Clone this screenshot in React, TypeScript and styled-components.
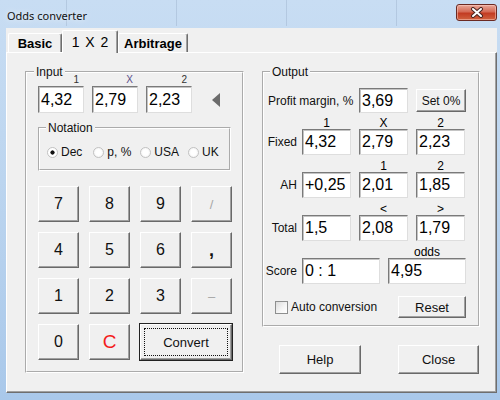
import React from "react";
import styled, { createGlobalStyle } from "styled-components";

const GlobalStyle = createGlobalStyle`
  html, body {
    margin: 0;
    padding: 0;
  }
  body {
    width: 500px;
    height: 400px;
    overflow: hidden;
    font-family: "Liberation Sans", Arial, sans-serif;
  }
`;

const Frame = styled.div`
  width: 500px;
  height: 400px;
  box-sizing: border-box;
  padding: 0 3px 7px 6px;
  display: flex;
  flex-direction: column;
  background:
    repeating-linear-gradient(
        90deg,
        transparent 0 66px,
        rgba(110, 130, 160, 0.22) 66px 67px,
        transparent 67px 110px
      )
      top / 100% 26px no-repeat,
    linear-gradient(180deg, #c8ddf3 0%, #bcd5ef 45%, #a9c8ea 100%);
`;

const TitleBar = styled.div`
  flex: none;
  height: 28px;
  display: flex;
  align-items: flex-start;
`;

const Title = styled.span`
  margin: 9px 0 0 1px;
  font: 11px/14px "Noto Sans", "Open Sans", sans-serif;
  color: #111;
  text-shadow: 0 0 6px rgba(255, 255, 255, 0.9);
`;

const CloseBox = styled.div`
  margin: 4px 0 0 auto;
  width: 41px;
  height: 17px;
  box-sizing: border-box;
  border: 1px solid #6b2a22;
  border-radius: 3px;
  background: linear-gradient(180deg, #e9a899 0%, #d46a55 45%, #c23b22 55%, #d0623f 100%);
  display: flex;
  align-items: center;
  justify-content: center;
  box-shadow: inset 0 0 0 1px rgba(255, 210, 200, 0.5);
`;

const Client = styled.div`
  flex: 1;
  display: flex;
  flex-direction: column;
  background: #f0f0f0;
`;

const TabStrip = styled.div`
  flex: none;
  height: 24px;
  display: flex;
  align-items: flex-end;
  padding-left: 2px;
  position: relative;
  z-index: 1;
`;

const Tab = styled.div<{ $active?: boolean; $w: number }>`
  width: ${(p) => p.$w}px;
  height: ${(p) => (p.$active ? 23 : 19)}px;
  margin-bottom: ${(p) => (p.$active ? -1 : 0)}px;
  box-sizing: border-box;
  display: flex;
  align-items: center;
  justify-content: center;
  background: #f0f0f0;
  border-top: 1px solid #fff;
  border-left: 1px solid #fff;
  border-right: 1px solid #6e6e6e;
  box-shadow: inset -1px 0 0 #a0a0a0;
  border-radius: 2px 2px 0 0;
  font-size: ${(p) => (p.$active ? 14 : 13)}px;
  font-weight: ${(p) => (p.$active ? 400 : 700)};
  word-spacing: ${(p) => (p.$active ? 2 : 0)}px;
  color: #000;
  white-space: pre;
`;

const TabPage = styled.div`
  flex: 1;
  box-sizing: border-box;
  border-style: solid;
  border-width: 1px;
  border-color: #fff #6e6e6e #6e6e6e #fff;
  box-shadow: inset -1px -1px 0 #a0a0a0;
  padding: 12px 0 0 18px;
  display: flex;
  align-items: flex-start;
  gap: 18px;
`;

/* etched group box: grey line with a white line beside it */
const Group = styled.fieldset<{ $w?: number; $pad: string }>`
  margin: 0;
  min-width: 0;
  ${(p) => (p.$w ? `width: ${p.$w}px;` : "")}
  box-sizing: border-box;
  padding: ${(p) => p.$pad};
  border: 2px groove #ffffff;
`;

const Legend = styled.legend<{ $offset: number }>`
  padding: 0 2px;
  margin-left: ${(p) => p.$offset}px;
  font-size: 12px;
  line-height: 14px;
  color: #111;
`;

const HeadRow = styled.div`
  display: flex;
  gap: 8px;
  height: 9px;
  margin-top: -4px;
`;

const SmallHead = styled.span<{ $tint?: string }>`
  width: 46px;
  box-sizing: border-box;
  padding-right: 5px;
  text-align: right;
  font-size: 10px;
  line-height: 9px;
  color: ${(p) => p.$tint ?? "#333"};
`;

const InputsRow = styled.div`
  display: flex;
  align-items: center;
  gap: 8px;
  margin-top: 2px;
`;

const OddsBox = styled.div<{ $w: number; $h: number }>`
  width: ${(p) => p.$w}px;
  height: ${(p) => p.$h}px;
  box-sizing: border-box;
  background: #fff;
  border-style: solid;
  border-width: 1px;
  border-color: #7a7a7a #dedede #dedede #7a7a7a;
  box-shadow: inset 1px 1px 0 #c4c4c4;
  padding-left: 2px;
  font-size: 16px;
  line-height: ${(p) => p.$h - 2}px;
  color: #000;
  white-space: pre;
`;

const Arrow = styled.svg`
  margin-left: 12px;
`;

const RadioRow = styled.div`
  display: flex;
  align-items: center;
  gap: 9px;
  height: 14px;
`;

const RadioItem = styled.label<{ $extra?: number }>`
  display: flex;
  align-items: center;
  gap: 3px;
  margin-right: ${(p) => p.$extra ?? 0}px;
  font-size: 12px;
  color: #111;
`;

const RadioDot = styled.span<{ $on?: boolean }>`
  width: 11px;
  height: 11px;
  box-sizing: border-box;
  border-radius: 50%;
  border: 1px solid #c2c2c2;
  background: ${(p) =>
    p.$on
      ? "radial-gradient(circle, #111 0 1.8px, #fff 2.4px)"
      : "radial-gradient(circle, #fff 0 40%, #ececec 100%)"};
`;

const Keypad = styled.div`
  margin-top: 15px;
  display: grid;
  grid-template-columns: repeat(4, 41px);
  grid-auto-rows: 36px;
  gap: 10px;
`;

const Btn = styled.button<{ $tone?: "dim" | "red" | "bold"; $span?: number; $size?: number; $def?: boolean }>`
  grid-column: span ${(p) => p.$span ?? 1};
  margin: 0;
  padding: 0;
  box-sizing: border-box;
  background: #f0f0f0;
  border-style: solid;
  border-width: 1px;
  border-color: #fff #696969 #696969 #fff;
  box-shadow: ${(p) =>
    p.$def
      ? "0 0 0 1px #222, inset -1px -1px 0 #a0a0a0"
      : "inset -1px -1px 0 #a0a0a0"};
  outline: ${(p) => (p.$def ? "1px dotted #111" : "none")};
  outline-offset: -5px;
  font-family: "Liberation Sans", Arial, sans-serif;
  font-size: ${(p) => p.$size ?? 16}px;
  font-weight: ${(p) => (p.$tone === "bold" ? 700 : 400)};
  color: ${(p) =>
    p.$tone === "dim" ? "#a6a6a6" : p.$tone === "red" ? "#f41c1c" : "#111"};
`;

const RightCol = styled.div`
  width: 218px;
  display: flex;
  flex-direction: column;
`;

const GridRow = styled.div<{ $cols: string; $h: number; $mt: number }>`
  display: grid;
  grid-template-columns: ${(p) => p.$cols};
  height: ${(p) => p.$h}px;
  margin-top: ${(p) => p.$mt}px;
  align-items: center;
`;

const RowLabel = styled.span<{ $span?: number }>`
  grid-column: span ${(p) => p.$span ?? 1};
  box-sizing: border-box;
  padding-right: 5px;
  text-align: right;
  font-size: 12px;
  color: #111;
  white-space: nowrap;
`;

const LeftLabel = styled(RowLabel)`
  text-align: left;
  padding: 0 0 0 4px;
`;

const ColHead = styled.span<{ $col: number; $w: number }>`
  grid-column: ${(p) => p.$col};
  width: ${(p) => p.$w}px;
  text-align: center;
  font-size: 12px;
  line-height: 11px;
  color: #000;
`;

const CheckRow = styled.div`
  display: flex;
  align-items: center;
  height: 22px;
  margin-top: 12px;
  padding-left: 11px;
`;

const CheckBox = styled.span`
  width: 13px;
  height: 13px;
  box-sizing: border-box;
  border: 1px solid #8e8f8f;
  background: linear-gradient(135deg, #dcdcdc 0%, #f6f6f6 60%, #fff 100%);
  margin-right: 3px;
`;

const CheckText = styled.span`
  font-size: 12px;
  color: #111;
`;

const DialogButtons = styled.div`
  display: flex;
  margin-top: 18px;
  padding-left: 17px;
`;

const WideBtn = styled(Btn)<{ $w: number; $h: number; $push?: boolean; $right?: number }>`
  width: ${(p) => p.$w}px;
  height: ${(p) => p.$h}px;
  flex: none;
  margin-left: ${(p) => (p.$push ? "auto" : "0")};
  margin-right: ${(p) => p.$right ?? 0}px;
`;

const keys: { l: string; tone?: "dim" | "red" | "bold"; size?: number }[] = [
  { l: "7" },
  { l: "8" },
  { l: "9" },
  { l: "/", tone: "dim", size: 13 },
  { l: "4" },
  { l: "5" },
  { l: "6" },
  { l: ",", tone: "bold", size: 18 },
  { l: "1" },
  { l: "2" },
  { l: "3" },
  { l: "–", tone: "dim", size: 13 },
  { l: "0" },
  { l: "C", tone: "red", size: 19 },
];

const COLS4 = "38px 57px 57px 49px";
const COLS3 = "38px 86px 78px";

export default function App() {
  return (
    <>
      <GlobalStyle />
      <Frame>
        <TitleBar>
          <Title>Odds converter</Title>
          <CloseBox>
            <svg width="14" height="11" viewBox="0 0 14 11">
              <path d="M3 2 L11 9 M11 2 L3 9" stroke="#4a2520" strokeWidth="4" strokeLinecap="round" />
              <path d="M3 2 L11 9 M11 2 L3 9" stroke="#fff" strokeWidth="2" strokeLinecap="round" />
            </svg>
          </CloseBox>
        </TitleBar>
        <Client>
          <TabStrip>
            <Tab $w={54}>Basic</Tab>
            <Tab $w={56} $active>
              1 X 2
            </Tab>
            <Tab $w={70}>Arbitrage</Tab>
          </TabStrip>
          <TabPage>
            <Group $w={219} $pad="0 11px 11px 11px">
              <Legend $offset={-4}>Input</Legend>
              <HeadRow>
                <SmallHead>1</SmallHead>
                <SmallHead $tint="#5a4d8a">X</SmallHead>
                <SmallHead>2</SmallHead>
              </HeadRow>
              <InputsRow>
                <OddsBox $w={46} $h={27}>4,32</OddsBox>
                <OddsBox $w={46} $h={27}>2,79</OddsBox>
                <OddsBox $w={46} $h={27}>2,23</OddsBox>
                <Arrow width="8" height="14" viewBox="0 0 8 14">
                  <path d="M8 0 L0 7 L8 14 Z" fill="#6b6b6b" />
                </Arrow>
              </InputsRow>
              <Group $pad="10px 7px 10px 7px" style={{ marginTop: 8 }}>
                <Legend $offset={-1}>Notation</Legend>
                <RadioRow>
                  <RadioItem $extra={2}>
                    <RadioDot $on />
                    Dec
                  </RadioItem>
                  <RadioItem>
                    <RadioDot />
                    p, %
                  </RadioItem>
                  <RadioItem>
                    <RadioDot />
                    USA
                  </RadioItem>
                  <RadioItem>
                    <RadioDot />
                    UK
                  </RadioItem>
                </RadioRow>
              </Group>
              <Keypad>
                {keys.map((k) => (
                  <Btn key={k.l} $tone={k.tone} $size={k.size}>
                    {k.l}
                  </Btn>
                ))}
                <Btn $span={2} $size={13} $def>
                  Convert
                </Btn>
              </Keypad>
            </Group>

            <RightCol>
              <Group $w={218} $pad="0 0 7px 0">
                <Legend $offset={6}>Output</Legend>
                <GridRow $cols="38px 57px 57px 65px" $h={25} $mt={9}>
                  <LeftLabel $span={2}>Profit margin, %</LeftLabel>
                  <OddsBox $w={49} $h={25}>3,69</OddsBox>
                  <WideBtn $w={50} $h={23} $size={12}>
                    Set 0%
                  </WideBtn>
                </GridRow>
                <GridRow $cols={COLS4} $h={11} $mt={5}>
                  <ColHead $col={2} $w={49}>1</ColHead>
                  <ColHead $col={3} $w={49}>X</ColHead>
                  <ColHead $col={4} $w={49}>2</ColHead>
                </GridRow>
                <GridRow $cols={COLS4} $h={26} $mt={0}>
                  <RowLabel>Fixed</RowLabel>
                  <OddsBox $w={49} $h={26}>4,32</OddsBox>
                  <OddsBox $w={49} $h={26}>2,79</OddsBox>
                  <OddsBox $w={49} $h={26}>2,23</OddsBox>
                </GridRow>
                <GridRow $cols={COLS4} $h={11} $mt={6}>
                  <ColHead $col={3} $w={49}>1</ColHead>
                  <ColHead $col={4} $w={49}>2</ColHead>
                </GridRow>
                <GridRow $cols={COLS4} $h={26} $mt={0}>
                  <RowLabel>AH</RowLabel>
                  <OddsBox $w={49} $h={26}>+0,25</OddsBox>
                  <OddsBox $w={49} $h={26}>2,01</OddsBox>
                  <OddsBox $w={49} $h={26}>1,85</OddsBox>
                </GridRow>
                <GridRow $cols={COLS4} $h={11} $mt={6}>
                  <ColHead $col={3} $w={49}>&lt;</ColHead>
                  <ColHead $col={4} $w={49}>&gt;</ColHead>
                </GridRow>
                <GridRow $cols={COLS4} $h={26} $mt={0}>
                  <RowLabel>Total</RowLabel>
                  <OddsBox $w={49} $h={26}>1,5</OddsBox>
                  <OddsBox $w={49} $h={26}>2,08</OddsBox>
                  <OddsBox $w={49} $h={26}>1,79</OddsBox>
                </GridRow>
                <GridRow $cols={COLS3} $h={11} $mt={6}>
                  <ColHead $col={3} $w={78}>odds</ColHead>
                </GridRow>
                <GridRow $cols={COLS3} $h={26} $mt={0}>
                  <RowLabel>Score</RowLabel>
                  <OddsBox $w={78} $h={26}>0 : 1</OddsBox>
                  <OddsBox $w={78} $h={26}>4,95</OddsBox>
                </GridRow>
                <CheckRow>
                  <CheckBox />
                  <CheckText>Auto conversion</CheckText>
                  <WideBtn $w={68} $h={22} $size={13} $push $right={12}>
                    Reset
                  </WideBtn>
                </CheckRow>
              </Group>
              <DialogButtons>
                <WideBtn $w={82} $h={29} $size={13}>
                  Help
                </WideBtn>
                <WideBtn $w={81} $h={29} $size={13} $push $right={1}>
                  Close
                </WideBtn>
              </DialogButtons>
            </RightCol>
          </TabPage>
        </Client>
      </Frame>
    </>
  );
}
